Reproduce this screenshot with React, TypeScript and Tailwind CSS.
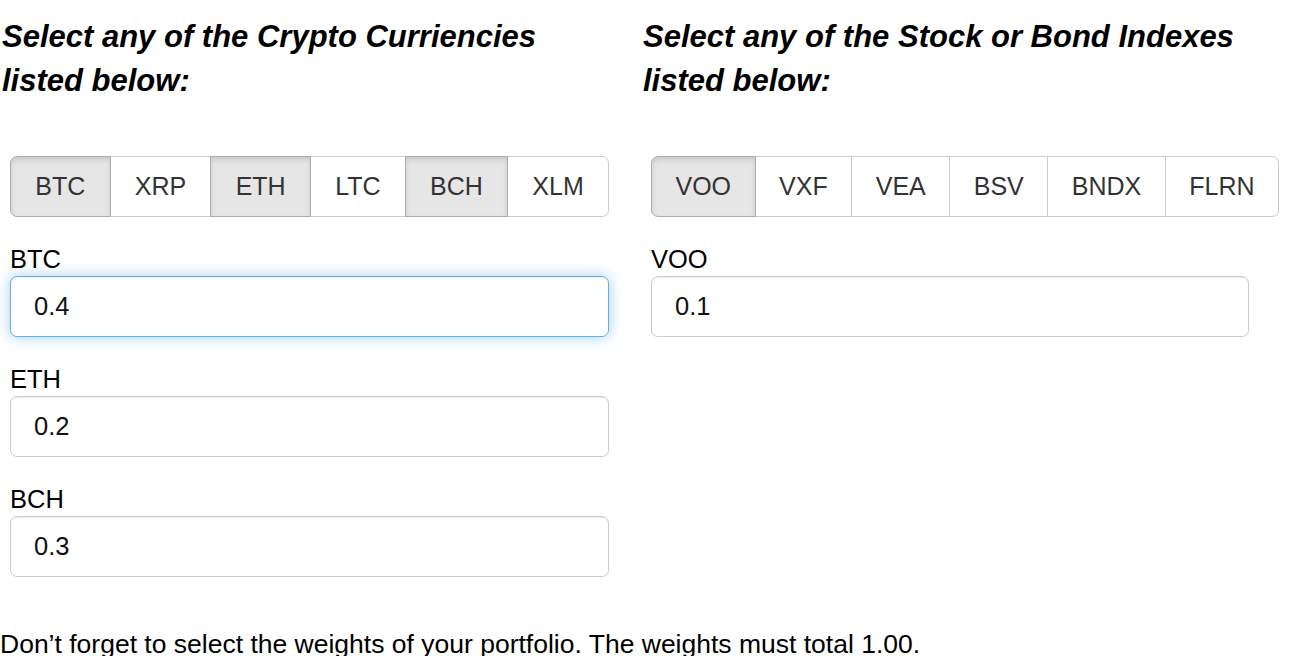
import React from "react";

interface Option {
  code: string;
  selected: boolean;
}

interface Weight {
  code: string;
  value: string;
  focused?: boolean;
}

const crypto: Option[] = [
  { code: "BTC", selected: true },
  { code: "XRP", selected: false },
  { code: "ETH", selected: true },
  { code: "LTC", selected: false },
  { code: "BCH", selected: true },
  { code: "XLM", selected: false },
];

const indexes: Option[] = [
  { code: "VOO", selected: true },
  { code: "VXF", selected: false },
  { code: "VEA", selected: false },
  { code: "BSV", selected: false },
  { code: "BNDX", selected: false },
  { code: "FLRN", selected: false },
];

const cryptoWeights: Weight[] = [
  { code: "BTC", value: "0.4", focused: true },
  { code: "ETH", value: "0.2" },
  { code: "BCH", value: "0.3" },
];

const indexWeights: Weight[] = [{ code: "VOO", value: "0.1" }];

const ButtonGroup: React.FC<{ options: Option[] }> = ({ options }) => (
  <div className="flex w-max min-w-full">
    {options.map((opt, i) => (
      <button
        key={opt.code}
        type="button"
        className={`flex-auto h-[61px] flex items-center justify-center px-[23.5px] border text-[25px] text-[#333] ${
          i > 0 ? "-ml-px" : ""
        } ${i === 0 ? "rounded-l-[7px]" : ""} ${
          i === options.length - 1 ? "rounded-r-[7px]" : ""
        } ${
          opt.selected
            ? "relative z-10 bg-[#e6e6e6] border-[#adadad] shadow-[inset_0_3px_5px_rgba(0,0,0,0.125)]"
            : "bg-white border-[#ccc]"
        }`}
      >
        {opt.code}
      </button>
    ))}
  </div>
);

const WeightInput: React.FC<{ weight: Weight }> = ({ weight }) => (
  <div className="mb-[25px]">
    <label className="block text-[25.5px] leading-[34px] text-black">
      {weight.code}
    </label>
    <input
      type="text"
      readOnly
      defaultValue={weight.value}
      className={`block w-full h-[61px] px-[23px] rounded-[7px] border bg-white text-[25.5px] text-[#111] outline-none ${
        weight.focused
          ? "border-[#66afe9] shadow-[inset_0_1px_1px_rgba(0,0,0,0.075),0_0_14px_rgba(102,175,233,0.6)]"
          : "border-[#ccc] shadow-[inset_0_1px_1px_rgba(0,0,0,0.075)]"
      }`}
    />
  </div>
);

const Column: React.FC<{
  title: string;
  options: Option[];
  weights: Weight[];
  padRight: string;
}> = ({ title, options, weights, padRight }) => (
  <div className="w-[641px] shrink-0">
    <h3 className="w-[610px] pl-[2px] text-[31px] leading-[44px] font-bold italic text-black">
      {title}
    </h3>
    <div className={`pl-[10px] ${padRight} mt-[53px]`}>
      <div className="mb-[25px]">
        <ButtonGroup options={options} />
      </div>
      {weights.map((w) => (
        <WeightInput key={w.code} weight={w} />
      ))}
    </div>
  </div>
);

export default function App() {
  return (
    <div
      className="w-[1290px] h-[656px] overflow-hidden bg-white pt-[15px]"
      style={{ fontFamily: '"Liberation Sans", Arial, sans-serif' }}
    >
      <div className="flex">
        <Column
          title="Select any of the Crypto Curriencies listed below:"
          options={crypto}
          weights={cryptoWeights}
          padRight="pr-[32px]"
        />
        <Column
          title="Select any of the Stock or Bond Indexes listed below:"
          options={indexes}
          weights={indexWeights}
          padRight="pr-[33px]"
        />
      </div>
      <p className="mt-[25px] text-[26.5px] leading-[34px] text-black">
        Don’t forget to select the weights of your portfolio. The weights must
        total 1.00.
      </p>
    </div>
  );
}
